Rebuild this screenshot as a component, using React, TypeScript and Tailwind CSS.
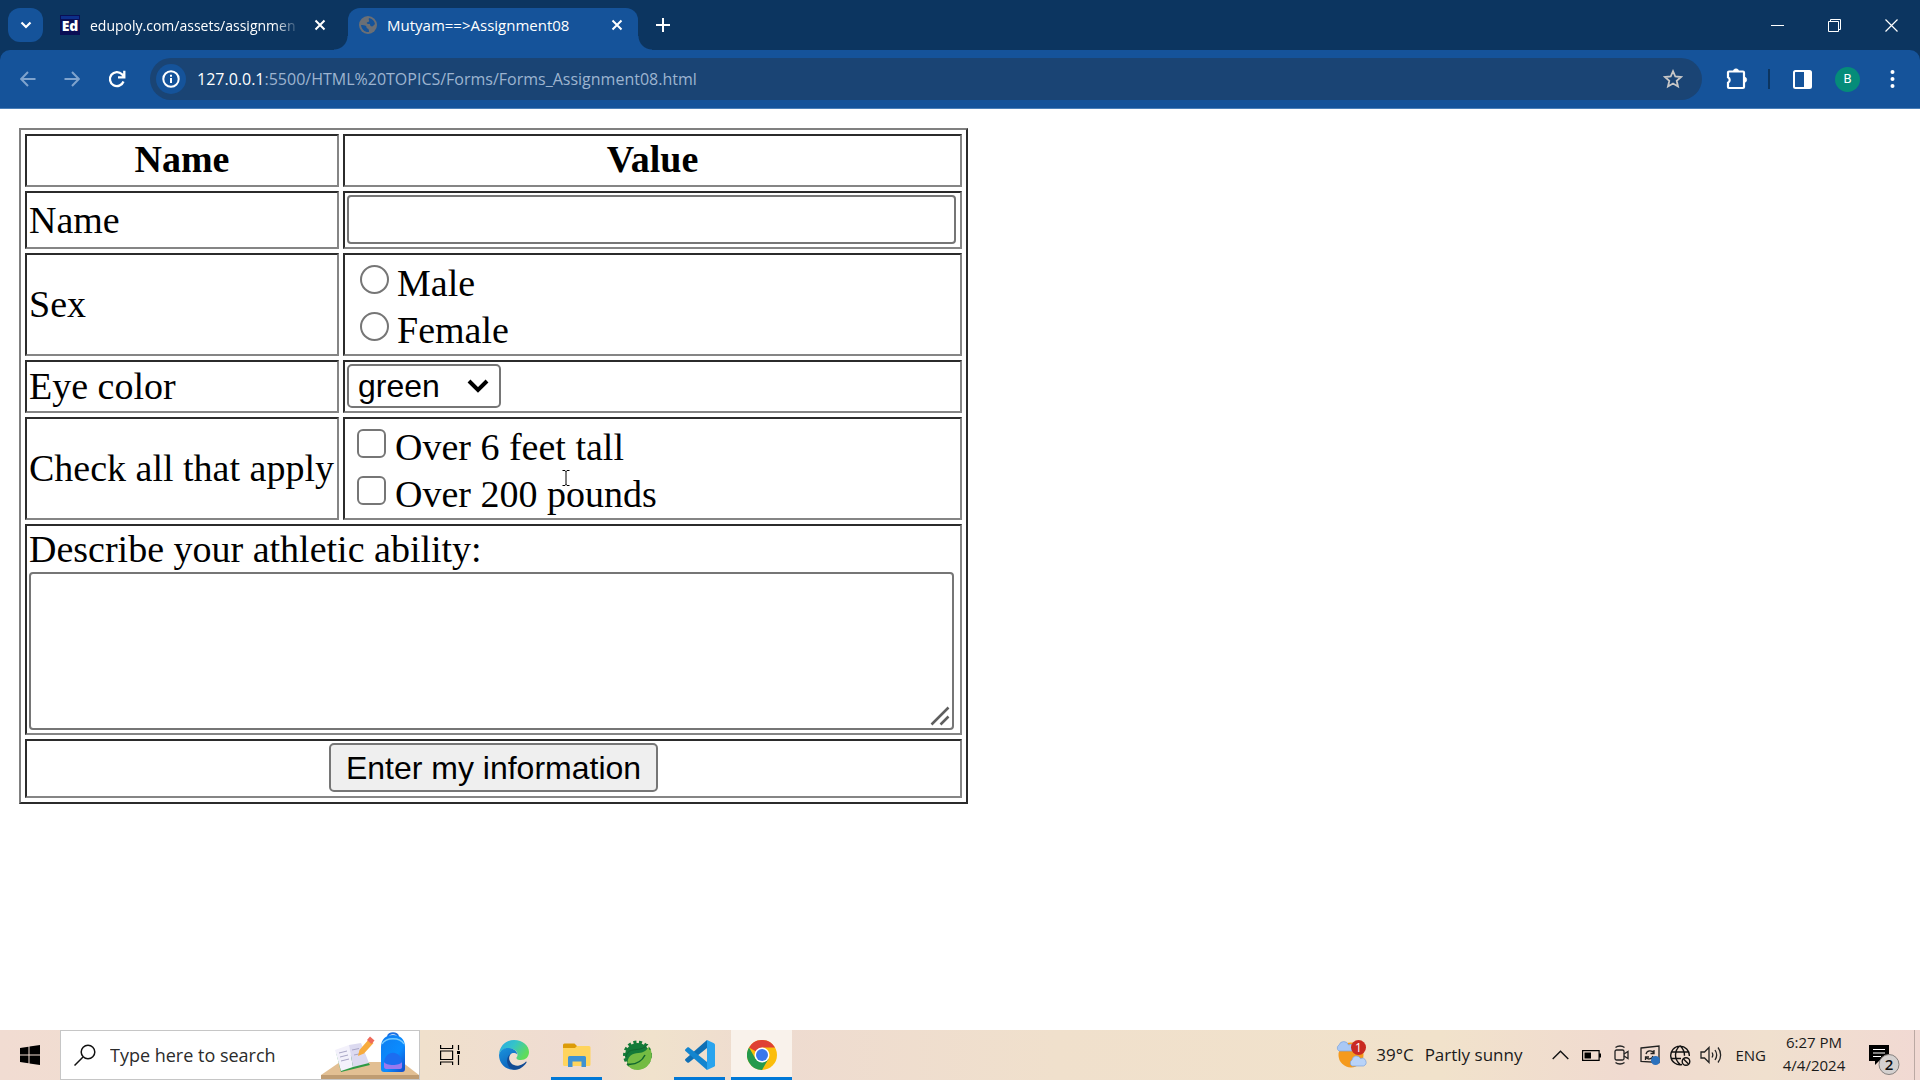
import React from "react";

const UI = "font-['Open_Sans','Noto_Sans',sans-serif]";

function CloseGlyph() {
  return (
    <svg width="12" height="12" viewBox="0 0 12 12" stroke="#fff" strokeWidth="2" fill="none" aria-hidden="true">
      <path d="M1.5 1.5l9 9M10.5 1.5l-9 9" />
    </svg>
  );
}

function TabStrip() {
  return (
    <header className="flex h-[50px] items-center bg-[#0c3560] text-[15px] text-white">
      <button aria-label="Search tabs" className="ml-2 flex h-[34px] w-[35px] shrink-0 items-center justify-center rounded-xl bg-[#15539a]">
        <svg width="12" height="8" viewBox="0 0 12 8" fill="none" stroke="#fff" strokeWidth="2.2">
          <path d="M1.5 1.5L6 6l4.500-4.500" />
        </svg>
      </button>
      <div className="ml-[17px] flex w-[288px] items-center">
        <svg width="20" height="20" viewBox="0 0 20 20" className="shrink-0" aria-hidden="true">
          <rect width="20" height="20" fill="#0a0f55" />
          <path d="M1 1h18v3H1z" fill="#0d2f8a" />
          <text x="10" y="16" textAnchor="middle" fontFamily="Open Sans, sans-serif" fontWeight="800" fontSize="14" fill="#fff">Ed</text>
        </svg>
        <span className="ml-[10px] w-[210px] whitespace-nowrap text-[14px] [mask-image:linear-gradient(to_right,#000_88%,transparent)]">
          edupoly.com/assets/assignmen
        </span>
        <button aria-label="Close tab" className="ml-[14px]"><CloseGlyph /></button>
      </div>
      <div className="flex items-end self-end">
        <span className="-ml-[14px] h-[14px] w-[14px] bg-[radial-gradient(circle_at_top_left,transparent_13px,#15539a_14px)]" />
        <div className="flex h-[42px] w-[290px] items-center rounded-t-xl bg-[#15539a] pb-[8px]">
          <svg width="18" height="18" viewBox="0 0 18 18" className="ml-[11px] shrink-0" aria-hidden="true">
            <circle cx="9" cy="9" r="9" fill="#6b6f75" />
            <path d="M2 9c2 0 4 0 5 1s0 2 1.500 2.500S10 15 10 16C6 16.500 2.500 13.500 2 9zM10 2c3 .5 5.500 3 6 6-1.500 1.500-2 2.500-3 2.500s-2-1-2-2-2 0-3-1 1-1.500 2-2-1-1.500 0-3.500z" fill="#15539a" />
          </svg>
          <span className="ml-[10px] w-[216px] whitespace-nowrap">Mutyam==&gt;Assignment08</span>
          <button aria-label="Close tab" className="ml-[8px]"><CloseGlyph /></button>
        </div>
        <span className="h-[14px] w-[14px] bg-[radial-gradient(circle_at_top_right,transparent_13px,#15539a_14px)]" />
      </div>
      <button aria-label="New tab" className="ml-1">
        <svg width="14" height="14" viewBox="0 0 14 14" stroke="#fff" strokeWidth="2"><path d="M7 0v14M0 7h14" /></svg>
      </button>
      <div className="ml-auto flex items-center gap-[44px] pr-[22px]">
        <button aria-label="Minimize">
          <svg width="13" height="13" viewBox="0 0 13 13" stroke="#fff"><path d="M0 6.500h13" /></svg>
        </button>
        <button aria-label="Restore">
          <svg width="13" height="13" viewBox="0 0 13 13" stroke="#fff" fill="none"><path d="M.5 2.500h10v10H.5zM2.500 2.500v-2h10v10h-2" /></svg>
        </button>
        <button aria-label="Close window">
          <svg width="13" height="13" viewBox="0 0 13 13" stroke="#fff" strokeWidth="1.200"><path d="M.5.5l12 12M12.500.5l-12 12" /></svg>
        </button>
      </div>
    </header>
  );
}

function Toolbar() {
  return (
    <div className="bg-[#0c3560]">
      <nav className="flex h-[59px] items-center rounded-t-[10px] border-b border-[#4a7fb8] bg-[#15539a] text-white">
        <button aria-label="Back" className="ml-5">
          <svg width="16" height="16" viewBox="0 0 16 16" fill="none" stroke="#7fa3cd" strokeWidth="2"><path d="M15.500 8H1.500M8 1L1.200 8 8 15" /></svg>
        </button>
        <button aria-label="Forward" className="ml-[28px]">
          <svg width="16" height="16" viewBox="0 0 16 16" fill="none" stroke="#7fa3cd" strokeWidth="2"><path d="M.5 8h14M8 1l6.800 7L8 15" /></svg>
        </button>
        <button aria-label="Reload" className="ml-[28px]">
          <svg width="18" height="18" viewBox="0 0 18 18" fill="none" stroke="#fff" strokeWidth="2.300"><path d="M15.500 11.500A7 7 0 1 1 14 4.200L16 6.500M16.300.8v6.500H10" /></svg>
        </button>
        <div className="ml-[24px] flex h-[42px] flex-1 items-center rounded-full bg-[#1a4474] pl-[6px] pr-[19px]">
          <button aria-label="Site information" className="flex h-[30px] w-[30px] shrink-0 items-center justify-center rounded-full bg-[#15539a]">
            <svg width="18" height="18" viewBox="0 0 18 18" fill="none" stroke="#fff" strokeWidth="2">
              <circle cx="9" cy="9" r="7.700" /><path d="M9 8v5M9 4.800v2" />
            </svg>
          </button>
          <div className="ml-[11px] flex-1 whitespace-nowrap text-[16px] text-[#9db4d0]">
            <span className="text-white">127.0.0.1</span>:5500/HTML%20TOPICS/Forms/Forms_Assignment08.html
          </div>
          <button aria-label="Bookmark">
            <svg width="20" height="20" viewBox="0 0 20 20" fill="none" stroke="#c7c7c7" strokeWidth="1.800">
              <path d="M10 2.200l2.300 5.300 5.700.5-4.300 3.800 1.300 5.700-5-3-5 3 1.300-5.700L2 8l5.700-.5z" />
            </svg>
          </button>
        </div>
        <button aria-label="Extensions" className="ml-6">
          <svg width="22" height="22" viewBox="0 0 22 22">
            <path d="M3 3.500h14a1 1 0 0 1 1 1V19a1 1 0 0 1-1 1H3a1 1 0 0 1-1-1v-4.300a3 3 0 0 0 0-5.400V4.500a1 1 0 0 1 1-1z" fill="none" stroke="#fff" strokeWidth="2.200" />
            <path d="M7.300 3.500a2.700 2.700 0 0 1 5.400 0zM18 9a2.700 2.700 0 0 1 0 5.400z" fill="#fff" stroke="#fff" strokeWidth=".6" />
          </svg>
        </button>
        <span className="ml-5 h-5 w-[2px] bg-[#0c3560]" />
        <button aria-label="Side panel" className="ml-[23px]">
          <svg width="19" height="19" viewBox="0 0 19 19"><rect x="1" y="1" width="17" height="17" rx="1.500" fill="none" stroke="#fff" strokeWidth="2" /><path d="M11 1h7v17h-7z" fill="#fff" /></svg>
        </button>
        <button aria-label="Profile" className="ml-[23px] flex h-[25px] w-[25px] items-center justify-center rounded-full bg-[#058c79] font-['Roboto',sans-serif] text-[13px]">B</button>
        <button aria-label="Menu" className="ml-[30px] mr-[25px]">
          <svg width="5" height="18" viewBox="0 0 5 18" fill="#fff"><circle cx="2.500" cy="2" r="2" /><circle cx="2.500" cy="9" r="2" /><circle cx="2.500" cy="16" r="2" /></svg>
        </button>
      </nav>
    </div>
  );
}

const cell = "border-2 border-t-[#2b2b2b] border-l-[#2b2b2b] border-r-[#858585] border-b-[#858585] px-[2px]";
const control = "border-2 border-[#767676] bg-white";

function FormPage() {
  return (
    <main className="flex-1 bg-white px-[19px] pt-[19px] font-['Liberation_Serif',serif] text-[38px] leading-[43px] text-black">
      <form onSubmit={(e) => e.preventDefault()}>
        <table className="border-separate border-spacing-[4px] border-2 border-t-[#808080] border-l-[#808080] border-r-[#2b2b2b] border-b-[#2b2b2b]">
          <thead>
            <tr className="h-[53px]">
              <th className={`${cell} min-w-[314px] pb-[2px] text-center font-bold`}>Name</th>
              <th className={`${cell} min-w-[619px] pb-[2px] text-center font-bold`}>Value</th>
            </tr>
          </thead>
          <tbody>
            <tr className="h-[58px]">
              <td className={cell}><label htmlFor="name">Name</label></td>
              <td className={`${cell} pt-[2px] align-top`}>
                <input id="name" type="text" className={`${control} block h-[49px] w-[609px] rounded-[4px] px-1`} />
              </td>
            </tr>
            <tr className="h-[103px]">
              <td className={cell}>Sex</td>
              <td className={cell}>
                {["Male", "Female"].map((s) => (
                  <label key={s} className="flex h-[47px] items-center pl-[13px]">
                    <input type="radio" name="sex" className="mb-1 h-[29px] w-[29px] appearance-none rounded-full border-2 border-[#767676] bg-white" />
                    <span className="ml-[8px] mt-[4px]">{s}</span>
                  </label>
                ))}
              </td>
            </tr>
            <tr className="h-[53px]">
              <td className={cell}><label htmlFor="eye">Eye color</label></td>
              <td className={`${cell} pt-[2px] align-top`}>
                <div className="relative w-[154px]">
                  <select id="eye" className={`${control} block h-[44px] w-full appearance-none rounded-[5px] pl-[9px] font-['Liberation_Sans',sans-serif] text-[32px] leading-[38px]`}>
                    <option>green</option>
                  </select>
                  <svg width="22" height="14" viewBox="0 0 22 14" fill="none" stroke="#000" strokeWidth="4" className="pointer-events-none absolute right-[12px] top-[15px]">
                    <path d="M2 2l9 9 9-9" />
                  </svg>
                </div>
              </td>
            </tr>
            <tr className="h-[103px]">
              <td className={cell}>Check all that apply</td>
              <td className={cell}>
                {["Over 6 feet tall", "Over 200 pounds"].map((s) => (
                  <label key={s} className="flex h-[47px] items-center pl-[10px]">
                    <input type="checkbox" className="mb-1 h-[29px] w-[29px] appearance-none rounded-[6px] border-2 border-[#767676] bg-white" />
                    <span className="ml-[9px] mt-[4px]">{s}</span>
                  </label>
                ))}
              </td>
            </tr>
            <tr className="h-[211px]">
              <td colSpan={2} className={cell}>
                <label htmlFor="ability" className="block">Describe your athletic ability:</label>
                <div className="relative mb-[2px] mt-px w-[925px]">
                  <textarea id="ability" className={`${control} block h-[158px] w-full resize-none rounded-[4px] p-1`} />
                  <svg width="20" height="20" viewBox="0 0 20 20" stroke="#5f5f5f" strokeWidth="2.500" className="pointer-events-none absolute bottom-[4px] right-[4px]">
                    <path d="M1.500 18.500l17-17M10.500 18.500l8-8" />
                  </svg>
                </div>
              </td>
            </tr>
            <tr className="h-[59px]">
              <td colSpan={2} className={`${cell} pt-[2px] text-center align-top`}>
                <button type="submit" className="mx-auto block h-[49px] rounded-[5px] border-2 border-[#767676] bg-[#efefef] px-[15px] font-['Liberation_Sans',sans-serif] text-[32px] leading-[42px]">
                  Enter my information
                </button>
              </td>
            </tr>
          </tbody>
        </table>
      </form>
      <svg width="8" height="16" viewBox="0 0 8 16" fill="none" stroke="#000" className="pointer-events-none absolute left-[562px] top-[470px]">
        <path d="M.5.5h2.500l1 1 1-1h2.500M4 1v14M.5 15.500h2.500l1-1 1 1h2.500" />
      </svg>
    </main>
  );
}

function EdgeIcon() {
  return (
    <svg width="30" height="30" viewBox="0 0 30 30" aria-hidden="true">
      <defs>
        <linearGradient id="eg" x1="0" y1="0" x2="1" y2=".5"><stop offset="0" stopColor="#2aa7e6" /><stop offset=".5" stopColor="#35c4c8" /><stop offset="1" stopColor="#5fdc5a" /></linearGradient>
        <linearGradient id="eb" x1="0" y1="0" x2=".5" y2="1"><stop offset="0" stopColor="#1b94dd" /><stop offset="1" stopColor="#0c62bb" /></linearGradient>
      </defs>
      <path d="M0 14C1 5 7.500 0 15 0c9 0 15 6 15 12 0 5-3.500 8-8 8-3.500 0-5-1.300-4.500-2.500 2-2 1.500-6.500-3.500-8.500C8 7 2.500 9 0 14z" fill="url(#eg)" />
      <path d="M0 15C1 9.500 6 7.500 10 8c5 .5 8 3.500 8.500 6.500C14 11 9 14 10 20c.7 4.500 5 8.500 9.500 9C9 32 0 25 0 15z" fill="url(#eb)" />
      <path d="M12 13.500c-5 6 1 13.500 8 12 3.500-.7 5.500-2.300 7-4 .7 0 .8.6.5 1C24 28 19 30.500 14 29.500 7 27 6 17 12 13.500z" fill="#114a94" />
    </svg>
  );
}

function FolderIcon() {
  return (
    <svg width="28" height="24" viewBox="0 0 28 24" aria-hidden="true">
      <path d="M0 2a1.500 1.500 0 0 1 1.500-1.500h10L14 3v5H0z" fill="#dc9b08" />
      <path d="M0 5h12l2-2h12a1.500 1.500 0 0 1 1.500 1.500v17a1.500 1.500 0 0 1-1.500 1.500H1.500A1.500 1.500 0 0 1 0 21.500z" fill="#ffd45d" />
      <path d="M5 24V14.500A1.500 1.500 0 0 1 6.500 13h15a1.500 1.500 0 0 1 1.500 1.500V24h-4.500v-5.500h-9V24z" fill="#3f92d2" />
    </svg>
  );
}

function SpringIcon() {
  return (
    <svg width="30" height="30" viewBox="0 0 30 30" aria-hidden="true">
      <circle cx="15.500" cy="15" r="12.700" fill="none" stroke="#147a38" strokeWidth="3.500" strokeDasharray="3 2.540" />
      <circle cx="15.500" cy="15.500" r="12.500" fill="#147a38" />
      <path d="M28.500 9c4 10-2 21-13 21-4 0-7-1.500-9-4z" fill="#74bb43" />
      <path d="M27 6c.5 9-1 18-12 18-5 0-8-.5-9.500 2-1-10 5-13 11-13 5 0 9-3 10.500-7z" fill="#74bb43" />
      <path d="M5 24c8 1 14-1 18-9" fill="none" stroke="#11662f" strokeWidth="1.500" />
      <path d="M4 17c1-8 9-7 14-8 4-.8 7-3 8-5" fill="none" stroke="#11662f" strokeWidth="1" />
    </svg>
  );
}

function CodeIcon() {
  return (
    <svg width="30" height="30" viewBox="0 0 30 30" aria-hidden="true">
      <path d="M22 0v8L4 22.500c-.6.500-1.200.4-1.700 0L.4 20.700c-.5-.6-.5-1.200 0-1.700z" fill="#0f6fb4" />
      <path d="M22 30v-8L4 7.500c-.6-.5-1.200-.4-1.700 0L.4 9.300c-.5.600-.5 1.200 0 1.700z" fill="#1385cf" />
      <path d="M22 0l7 3.200c.6.300 1 .9 1 1.600v20.400c0 .7-.4 1.300-1 1.600L22 30z" fill="#29a4ee" />
    </svg>
  );
}

function ChromeIcon() {
  return (
    <svg width="30" height="30" viewBox="0 0 30 30" aria-hidden="true">
      <circle cx="15" cy="15" r="15" fill="#fbbd0a" />
      <path d="M15 15L2 7.500A15 15 0 0 1 28 7.500H15z" fill="#df4034" />
      <path d="M2 7.500A15 15 0 0 0 15 30l6.500-11.300L8.500 18.700z" fill="#249a4c" />
      <circle cx="15" cy="15" r="7.500" fill="#fff" />
      <circle cx="15" cy="15" r="6" fill="#3a78ec" />
    </svg>
  );
}

function SearchArt() {
  return (
    <svg width="98" height="48" viewBox="0 0 98 48" className="ml-auto shrink-0 self-end" aria-hidden="true">
      <defs>
        <linearGradient id="bag" x1="0" y1="0" x2="1" y2="1"><stop offset="0" stopColor="#0f7df0" /><stop offset=".6" stopColor="#0a8cff" /><stop offset="1" stopColor="#1247c8" /></linearGradient>
      </defs>
      <path d="M19 31h62l17 13H0z" fill="#e2bf93" />
      <path d="M0 44h98v4H0z" fill="#bf9c72" />
      <path d="M15 21l5 20 29-7-4-6z" fill="#2f9a45" />
      <path d="M14 19l14-5 4 22-12 4z" fill="#f3f1fb" />
      <path d="M28 14l12-2 8 20-16 4z" fill="#dcdaf0" />
      <path d="M18 22l8-2M19 26l8-2M20 30l8-2M31 19l7-1.500M33 24l7-1.500" stroke="#a9a6c6" />
      <path d="M37 25l1.500-6L48 8l4.500 4-9.500 10.500z" fill="#f7ab3c" />
      <path d="M46 9l3-3.500 4.500 4-3 3.500z" fill="#ef6a5a" />
      <path d="M67 6c0-5 10-5 10 0" fill="none" stroke="#1c6fe0" strokeWidth="2" />
      <path d="M60 38V16C60 8 65 4 72 4s12 4 12 12v22c0 2-1 3-3 3H63c-2 0-3-1-3-3z" fill="url(#bag)" />
      <path d="M61 13C65 6 79 6 83 13" fill="none" stroke="#72c8ff" strokeWidth="1.500" />
      <path d="M63 33c0-15 18-15 18 0v3c0 1-1 2-2 2H65c-1 0-2-1-2-2z" fill="#1c6df0" />
      <path d="M63 31c2 4 16 4 18 0v5c0 1-1 2-2 2H65c-1 0-2-1-2-2z" fill="#9a79ee" />
    </svg>
  );
}

function Taskbar() {
  return (
    <footer className="flex h-[50px] items-center bg-[linear-gradient(90deg,#f1dcd2_0%,#f0e0cc_22%,#efdcd2_30%,#f0e2cc_34%,#eedbd0_40%,#f0e0cc_55%,#f1e2cb_75%,#f0dad0_85%,#f0e0ce_92%,#f1d9d3_100%)] text-[18px] text-[#1a1a1a]">
      <button aria-label="Start" className="flex h-full w-[60px] shrink-0 items-center justify-center">
        <svg width="20" height="20" viewBox="0 0 20 20"><path d="M0 3l8.500-1.200v7.700H0zM9.500 1.600L20 0v9.500H9.500zM0 10.500h8.500v7.700L0 17zM9.500 10.500H20V20L9.500 18.400z" /></svg>
      </button>
      <label className="flex h-full w-[360px] shrink-0 items-center border border-[#c6c6c6] bg-white">
        <svg width="22" height="22" viewBox="0 0 22 22" fill="none" stroke="#111" strokeWidth="1.500" className="ml-[13px] shrink-0"><circle cx="14" cy="8" r="6.800" /><path d="M9 13L.5 21.500" /></svg>
        <input type="search" aria-label="Search" placeholder="Type here to search" className="ml-[14px] w-[200px] min-w-0 shrink-0 bg-transparent text-[18px] placeholder:text-[#2b2b2b]" />
        <SearchArt />
      </label>
      <div className="flex h-full shrink-0 items-stretch">
        <button aria-label="Task view" className="flex w-[60px] items-center justify-center">
          <svg width="20" height="20" viewBox="0 0 20 20" fill="none" stroke="#000" strokeWidth="1.200"><path d="M.6 0v3.500h12V0M.6 6h12v8.500H.6zM.6 20v-3h12v3M18.500 0v5M18.500 10v10" /><path d="M17 6h3v3h-3z" fill="#000" stroke="none" /></svg>
        </button>
        <button aria-label="Edge" className="ml-1 flex w-[60px] items-center justify-center"><EdgeIcon /></button>
        <button aria-label="File Explorer" className="ml-[7px] flex w-[51px] items-center justify-center border-b-[3px] border-[#0078d7] pt-[2px]"><FolderIcon /></button>
        <button aria-label="Spring Tools" className="ml-[5px] flex w-[60px] items-center justify-center"><SpringIcon /></button>
        <button aria-label="Visual Studio Code" className="ml-[7px] flex w-[51px] items-center justify-center border-b-[3px] border-[#0078d7] pt-[3px]"><CodeIcon /></button>
        <button aria-label="Chrome" className="ml-[6px] flex w-[61px] items-center justify-center border-b-[3px] border-[#0078d7] bg-[#f9f2eb] pt-[3px]"><ChromeIcon /></button>
      </div>
      <button className="ml-auto flex items-center whitespace-nowrap text-[17px]">
        <svg width="31" height="30" viewBox="0 0 31 30" aria-hidden="true">
          <circle cx="15" cy="15" r="12.500" fill="#f59a1c" />
          <path d="M3 11a3.500 3.500 0 0 1 0-6 5 5 0 0 1 9.500 0 3.200 3.200 0 0 1 3.500 6z" fill="#a9c8f5" stroke="#7ba4de" strokeWidth=".7" />
          <path d="M16 26a3.500 3.500 0 0 1 0-6 4.500 4.500 0 0 1 8.500-1.500 3.500 3.500 0 0 1 3 7.500z" fill="#b9d3f8" stroke="#7ba4de" strokeWidth=".7" />
          <circle cx="22.500" cy="7.500" r="7.500" fill="#c92a22" />
          <text x="22.500" y="12" textAnchor="middle" fontFamily="Open Sans, sans-serif" fontSize="12" fill="#fff">1</text>
        </svg>
        <span className="ml-[9px]">39°C</span>
        <span className="ml-[11px]">Partly sunny</span>
      </button>
      <div className="ml-[30px] flex items-center gap-[13px]">
        <button aria-label="Show hidden icons">
          <svg width="17" height="10" viewBox="0 0 17 10" fill="none" stroke="#111" strokeWidth="1.400"><path d="M.7 9L8.500 1.200 16.300 9" /></svg>
        </button>
        <svg width="19" height="11" viewBox="0 0 19 11" aria-hidden="true"><path d="M.6.6h16.500v9.800H.6z" fill="none" stroke="#000" strokeWidth="1.200" /><path d="M2.500 2.500h6.500v6H2.500zM17 3.500h2v4h-2z" /></svg>
        <svg width="15" height="20" viewBox="0 0 15 20" fill="none" stroke="#222" strokeWidth="1.300" aria-hidden="true"><rect x="1" y="5" width="9" height="10" rx="1.500" /><path d="M10 9l4-2.500v7L10 11M1.500 2.500C4 .5 8 .5 10.500 2.500M1.500 17.500C4 19.500 8 19.500 10.500 17.500" /></svg>
        <svg width="20" height="20" viewBox="0 0 20 20" fill="none" stroke="#222" strokeWidth="1.300" className="ml-[-2px]" aria-hidden="true"><path d="M1 3l18-2v16.500L1 16.500z" /><path d="M6 9c1-4 6-4 8-1M14 5v3.500h-3.500M13 11c-1 3.500-5.500 4-7.500 1M5.500 15v-3H9" /><circle cx="15.500" cy="15.500" r="4.500" fill="#2b71bd" stroke="none" /></svg>
        <svg width="21" height="21" viewBox="0 0 21 21" fill="none" stroke="#111" strokeWidth="1.400" className="ml-[-3px]" aria-hidden="true"><path d="M12 19.500A9.300 9.300 0 1 1 19.300 11M10 .8c-6 5-6 13.500 0 18.500M10 .8c3 2.500 4.500 6 4.500 10M1 7h18M1 13.500h10" /><circle cx="16" cy="16.500" r="3.800" /><path d="M13.500 14l5 5" /></svg>
        <svg width="22" height="18" viewBox="0 0 22 18" fill="none" stroke="#222" strokeWidth="1.300" className="ml-[-4px]" aria-hidden="true"><path d="M1 6h3.500L9 1.500v15L4.500 12H1zM12 6.500c1 1.500 1 3.500 0 5M15 4c2 3 2 7 0 10M18 1.500c3.500 4.500 3.500 10.500 0 15" /></svg>
        <span className="text-[15px]">ENG</span>
      </div>
      <div className="ml-[16px] flex w-[64px] flex-col items-center whitespace-nowrap pb-[2px] text-[15px] leading-[23px]">
        <span>6:27 PM</span>
        <span>4/4/2024</span>
      </div>
      <button aria-label="2 notifications" className="ml-[23px] mr-[13px] mt-[10px]">
        <svg width="32" height="32" viewBox="0 0 32 32">
          <path d="M0 1h20v16H10l-4 4v-4H0z" fill="#000" /><path d="M4 5.500h12M4 9h12M4 12.500h8" stroke="#fff" strokeWidth="1.200" />
          <circle cx="20" cy="20.500" r="10" fill="#d4d0cf" stroke="#85807e" />
          <text x="20" y="26" textAnchor="middle" fontFamily="Open Sans, sans-serif" fontWeight="600" fontSize="15" fill="#111">2</text>
        </svg>
      </button>
      <span className="mr-[5px] h-full w-px bg-[#bba9a3]" />
    </footer>
  );
}

export default function App() {
  return (
    <div className={`relative flex min-h-screen flex-col overflow-hidden bg-white ${UI}`}>
      <TabStrip />
      <Toolbar />
      <FormPage />
      <Taskbar />
    </div>
  );
}
